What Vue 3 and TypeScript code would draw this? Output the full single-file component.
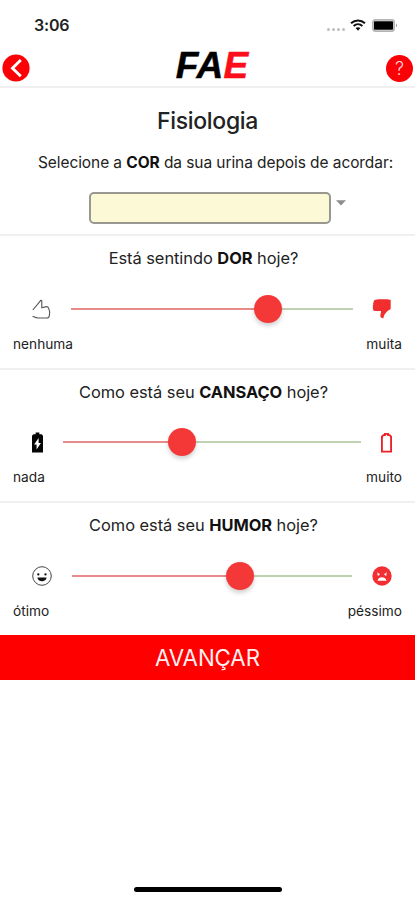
<script setup lang="ts">
import { ref } from 'vue'

type IconName = 'thumb-up' | 'thumb-down' | 'battery-full' | 'battery-empty' | 'happy' | 'sad'

interface Question {
  before: string
  keyword: string
  low: string
  high: string
  lowIcon: IconName
  highIcon: IconName
  value: number
  kind: string
}

const questions = ref<Question[]>([
  { before: 'Está sentindo', keyword: 'DOR', low: 'nenhuma', high: 'muita', lowIcon: 'thumb-up', highIcon: 'thumb-down', value: 70, kind: 'pain' },
  { before: 'Como está seu', keyword: 'CANSAÇO', low: 'nada', high: 'muito', lowIcon: 'battery-full', highIcon: 'battery-empty', value: 40, kind: 'fatigue' },
  { before: 'Como está seu', keyword: 'HUMOR', low: 'ótimo', high: 'péssimo', lowIcon: 'happy', highIcon: 'sad', value: 60, kind: 'mood' },
])
</script>

<template>
  <main class="screen">
    <div class="status">
      <span class="time">3:06</span>
      <div class="indicators">
        <span class="dots"><i v-for="n in 4" :key="n"></i></span>
        <svg class="wifi" viewBox="0 0 16 12">
          <path d="M1 4.3C5 .5 11 .5 15 4.3M3.6 7c2.6-2.4 6.2-2.4 8.8 0" fill="none" stroke="#111" stroke-width="2" />
          <path d="M5.5 9.1c1.5-1.3 3.500-1.3 5 0L8 11.800z" fill="#111" />
        </svg>
        <svg class="cell" viewBox="0 0 26 13">
          <rect x=".9" y=".9" width="21.200" height="11.200" rx="2.500" fill="#fff" stroke="#b4b4b4" stroke-width="1.800" />
          <rect x="2" y="2.200" width="19" height="8.600" rx=".8" fill="#000" />
          <path d="M24 4.500c1.500.6 1.500 3.400 0 4z" fill="#aaa" />
        </svg>
      </div>
    </div>

    <header class="header">
      <button class="round" aria-label="Voltar">
        <svg viewBox="0 0 28 28"><circle cx="14" cy="14" r="13.600" fill="#fb0007" /><path d="M18.800 6 10.500 14.300l8.300 8" fill="none" stroke="#fff" stroke-width="2.900" /></svg>
      </button>
      <h1 class="brand">FA<span>E</span></h1>
      <button class="round help" aria-label="Ajuda">?</button>
    </header>

    <section class="urine">
      <h2>Fisiologia</h2>
      <p>Selecione a <b>COR</b> da sua urina depois de acordar:</p>
      <div class="picker">
        <div class="swatch"></div>
        <svg class="caret" viewBox="0 0 10 6"><path d="M0 .3h10L5 5.600z" fill="#8e8e8e" /></svg>
      </div>
    </section>

    <section v-for="q in questions" :key="q.keyword" class="question" :class="q.kind">
      <p class="prompt">{{ q.before }} <b>{{ q.keyword }}</b> hoje?</p>
      <div class="range">
        <svg v-if="q.lowIcon === 'thumb-up'" class="icon" viewBox="0 0 20 20">
          <path d="M.8 11 8.200 2.200C8.600 1 9.900 1.200 9.800 2.500V8.800L14.500 7.600C16.200 7.400 16.600 8.600 16.900 10c.9 2 1.100 4.500.5 6.300-.3 1.800-1 2.700-2.400 2.700H6C4 19 3.300 18.500.6 17.300" fill="none" stroke="#555" stroke-width="1.100" stroke-linejoin="round" />
        </svg>
        <svg v-else-if="q.lowIcon === 'battery-full'" class="icon narrow" viewBox="0 0 12 22">
          <path d="M4 0h4v2h2.500L12 3.500V22H0V3.500L1.500 2H4z" fill="#050505" />
          <path d="M7.200 6.200 2.300 13.200H5v5.300l4.700-7H7.200z" fill="#fff" />
        </svg>
        <svg v-else class="icon" viewBox="0 0 20 20">
          <circle cx="10" cy="10" r="9.300" fill="none" stroke="#444" stroke-width="1" />
          <circle cx="6.300" cy="8.400" r="1.150" fill="#111" /><circle cx="13.500" cy="8.400" r="1.150" fill="#111" />
          <path d="M5.500 11.500h9c0 5-9 5-9 0z" fill="#111" />
        </svg>

        <div class="slider">
          <div class="filled" :style="{ width: q.value + '%' }"></div>
          <div class="knob" :style="{ left: q.value + '%' }"></div>
        </div>

        <svg v-if="q.highIcon === 'thumb-down'" class="icon" viewBox="0 0 20 20">
          <path d="M2.300 1.200C4 .4 6 .3 8 .3h7.500l3.200.6v8.500c0 1.300-2.700 1.700-3.900 3.300-1.200 1.700-3 2.800-3.300 6.500-2.600-.1-3.600-1.300-3.100-3.300l.7-3.900H3.200C1.600 12 .9 11.500 1.200 10.300c-.5-.7-.6-1.500-.1-2.300-.4-.8-.4-1.700.2-2.300-.4-.7-.3-1.500.3-2.100-.1-.9.100-1.700.7-2.400z" fill="#f22d2d" />
        </svg>
        <svg v-else-if="q.highIcon === 'battery-empty'" class="icon narrow" viewBox="0 0 12 22">
          <path d="M4.300 1.500h3.400v1.500h1.800L11 4.500V21H1V4.500L2.500 3h1.800z" fill="none" stroke="#ee2025" stroke-width="2" />
        </svg>
        <svg v-else class="icon" viewBox="0 0 20 20">
          <circle cx="10" cy="10" r="9.700" fill="#f22e32" />
          <path d="M5 6.800 8 8.500M15 6.800 12 8.500" stroke="#fff" stroke-width=".8" />
          <circle cx="6.300" cy="8.700" r=".9" fill="#fff" /><circle cx="13.700" cy="8.700" r=".9" fill="#fff" />
          <path d="M5.500 14.800c.8-4.600 8.200-4.600 9 0z" fill="#fff" />
        </svg>
      </div>
      <div class="labels"><span>{{ q.low }}</span><span>{{ q.high }}</span></div>
    </section>

    <button class="next">AVANÇAR</button>
    <div class="home"><span></span></div>
  </main>
</template>

<style>
body { background: #fff; }
</style>

<style scoped>
.screen {
  box-sizing: border-box;
  display: flex;
  flex-direction: column;
  width: 415px;
  height: 900px;
  overflow: hidden;
  font-family: Inter, "Liberation Sans", sans-serif;
  color: #222;
  background: #fff;
}
button { border: 0; padding: 0; font-family: inherit; }
h1, h2, p { margin: 0; }
.status {
  box-sizing: border-box;
  display: flex;
  justify-content: space-between;
  align-items: center;
  height: 50px;
  padding: 0 17px 0 34px;
}
.time { font-size: 16px; font-weight: 600; letter-spacing: -0.200px; color: #222; }
.indicators { display: flex; align-items: center; }
.dots { display: flex; gap: 2px; margin: 8px 5px 0 0; }
.dots i { width: 3px; height: 3px; border-radius: 50%; background: #bdbdbd; }
.wifi { width: 16px; height: 12px; margin-right: 6px; }
.cell { width: 26px; height: 13px; }
.header {
  box-sizing: border-box;
  display: flex;
  justify-content: space-between;
  align-items: center;
  height: 38px;
  padding: 0 2px 0 2px;
  border-bottom: 2px solid #f0f0f0;
}
.round { display: block; width: 28px; height: 28px; border-radius: 50%; background: none; }
.round svg { display: block; width: 28px; height: 28px; }
.round.help { width: 27px; height: 27px; background: #fb0007; color: #ffd9d9; font-size: 18px; line-height: 27px; font-weight: 300; }
.brand {
  padding: 0 0 4px 8px;
  font-family: "Liberation Sans", sans-serif;
  font-size: 37px;
  line-height: 34px;
  font-weight: 700;
  font-style: italic;
  letter-spacing: 0.200px;
  color: #000;
  -webkit-text-stroke: 0.500px currentColor;
}
.brand span { color: #fb0d1b; }
.urine {
  box-sizing: border-box;
  display: flex;
  flex-direction: column;
  align-items: center;
  height: 146px;
  padding-top: 18px;
}
.urine h2 { font-size: 23px; line-height: 30px; font-weight: 500; letter-spacing: -0.300px; }
.urine p { margin-top: 16px; padding-left: 16px; font-size: 15.500px; line-height: 22px; letter-spacing: -0.080px; white-space: nowrap; }
.picker { display: flex; gap: 5px; margin-top: 18px; padding-left: 19px; }
.swatch { box-sizing: border-box; width: 242px; height: 32px; border: 2px solid #999890; border-radius: 5px; background: #fcfad6; }
.caret { width: 10px; height: 6px; margin-top: 8px; }
.question {
  box-sizing: border-box;
  height: 133.600px;
  border-top: 2px solid #f0f0f0;
}
.prompt { padding: 11px 8px 0 0; font-size: 16.400px; line-height: 22px; letter-spacing: -0.030px; text-align: center; white-space: nowrap; }
b { font-weight: 700; color: #111; }
.range {
  display: flex;
  align-items: center;
  gap: 20px;
  height: 28px;
  margin: 25.500px 23px 0 32px;
}
.icon { flex: none; display: block; width: 20px; height: 20px; }
.icon.narrow { width: 11px; height: 21px; }
.slider { position: relative; flex: 1; height: 2px; background: #bed3b1; }
.pain .slider { margin: 0 -1px; }
.filled { height: 2px; background: #e68a8a; }
.knob {
  position: absolute;
  top: -13px;
  width: 28px;
  height: 28px;
  margin-left: -14px;
  border-radius: 50%;
  background: #f43838;
  box-shadow: 0 3px 4px rgba(0, 0, 0, 0.18);
}
.labels {
  display: flex;
  justify-content: space-between;
  padding: 11px 13px 0;
  font-size: 13.700px;
  line-height: 20px;
}
.next {
  flex: none;
  height: 45px;
  background: #fe0000;
  color: #fff0f0;
  font-size: 22.300px;
  line-height: 46px;
  letter-spacing: -0.100px;
  font-weight: 400;
}
.home { display: flex; flex: 1; align-items: flex-end; justify-content: center; padding-bottom: 8px; }
.home span { width: 148px; height: 5px; border-radius: 3px; background: #000; }
</style>
